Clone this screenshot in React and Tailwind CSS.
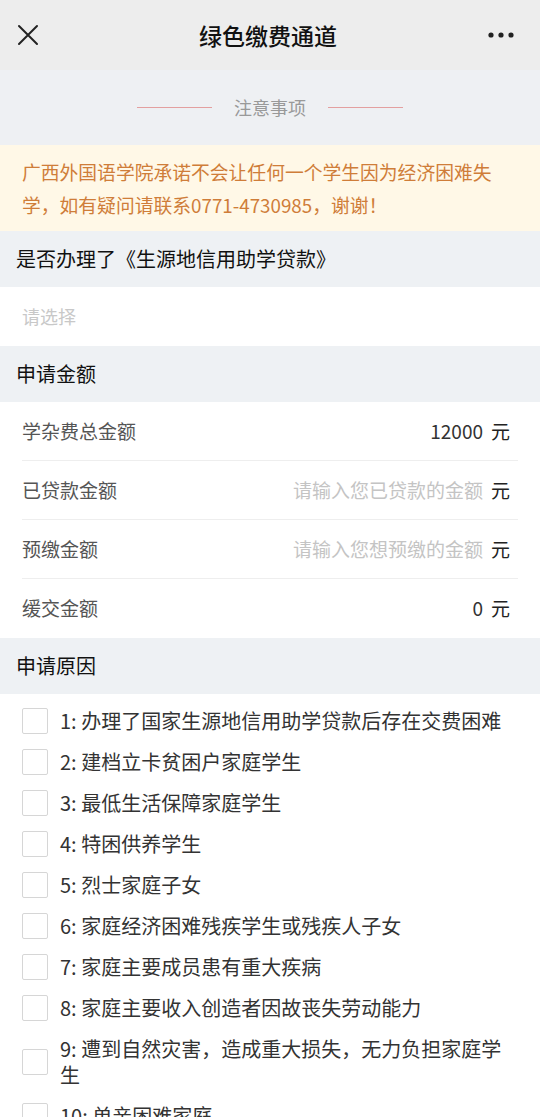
import React from 'react';

const font = { fontFamily: '"Noto Sans CJK SC", "Noto Sans", sans-serif' };

const reasons = [
  '办理了国家生源地信用助学贷款后存在交费困难',
  '建档立卡贫困户家庭学生',
  '最低生活保障家庭学生',
  '特困供养学生',
  '烈士家庭子女',
  '家庭经济困难残疾学生或残疾人子女',
  '家庭主要成员患有重大疾病',
  '家庭主要收入创造者因故丧失劳动能力',
  '遭到自然灾害，造成重大损失，无力负担家庭学生',
  '单亲困难家庭',
];

function SectionTitle({ children }) {
  return (
    <div className="flex h-[56px] items-center bg-[#eef1f4] px-4 text-[20px] text-[#111]">
      {children}
    </div>
  );
}

function AmountRow({ label, value, placeholder, last }) {
  return (
    <div className={`mx-[22px] flex h-[59px] items-center justify-between ${last ? '' : 'border-b border-[#eeeeee]'}`}>
      <span className="text-[19px] text-[#555]">{label}</span>
      <span className="flex items-center gap-[8px] pr-[8px] text-[19px]">
        {value ? (
          <span className="text-[#333]">{value}</span>
        ) : (
          <span className="text-[#c4c4c4]">{placeholder}</span>
        )}
        <span className="text-[#222]">元</span>
      </span>
    </div>
  );
}

export default function App() {
  return (
    <div className="min-h-screen w-[540px] overflow-hidden bg-white" style={font}>
      <header className="flex h-[70px] items-center justify-between bg-[#ededed] px-[16px]">
        <svg width="24" height="24" viewBox="0 0 24 24" className="text-[#222]">
          <path d="M3 3 L21 21 M21 3 L3 21" stroke="currentColor" strokeWidth="2" strokeLinecap="round" />
        </svg>
        <h1 className="ml-[8px] text-[23px] font-medium text-[#111]">绿色缴费通道</h1>
        <svg width="26" height="8" viewBox="0 0 26 8" className="mr-[10px] text-[#222]">
          <circle cx="3" cy="4" r="2.6" fill="currentColor" />
          <circle cx="13" cy="4" r="2.6" fill="currentColor" />
          <circle cx="23" cy="4" r="2.6" fill="currentColor" />
        </svg>
      </header>

      <div className="flex h-[75px] items-center justify-center gap-[22px] bg-[#eef0f3]">
        <span className="h-px w-[75px] bg-[#e3a0a0]" />
        <span className="text-[18px] text-[#999]">注意事项</span>
        <span className="h-px w-[75px] bg-[#e3a0a0]" />
      </div>

      <div className="bg-[#fff8e7] py-[10px] pl-[22px] pr-[40px] text-[18.8px] leading-[33px] text-[#cf7d39]">
        广西外国语学院承诺不会让任何一个学生因为经济困难失学，如有疑问请联系0771-4730985，谢谢！
      </div>

      <SectionTitle>是否办理了《生源地信用助学贷款》</SectionTitle>
      <div className="flex h-[59px] items-center px-[22px] text-[18px] text-[#c8c8c8]">请选择</div>

      <SectionTitle>申请金额</SectionTitle>
      <AmountRow label="学杂费总金额" value="12000" />
      <AmountRow label="已贷款金额" placeholder="请输入您已贷款的金额" />
      <AmountRow label="预缴金额" placeholder="请输入您想预缴的金额" />
      <AmountRow label="缓交金额" value="0" last />

      <SectionTitle>申请原因</SectionTitle>
      <ul className="pt-[6px]">
        {reasons.map((r, i) => (
          <li key={i} className="flex items-center gap-[12px] py-[7.5px] pl-[22px] pr-[34px]">
            <span className="h-[26px] w-[26px] shrink-0 rounded-[2px] border border-[#d6d6d6] bg-white" />
            <span className="text-[20px] leading-[26px] text-[#333]">
              {i + 1}: {r}
            </span>
          </li>
        ))}
      </ul>
    </div>
  );
}
